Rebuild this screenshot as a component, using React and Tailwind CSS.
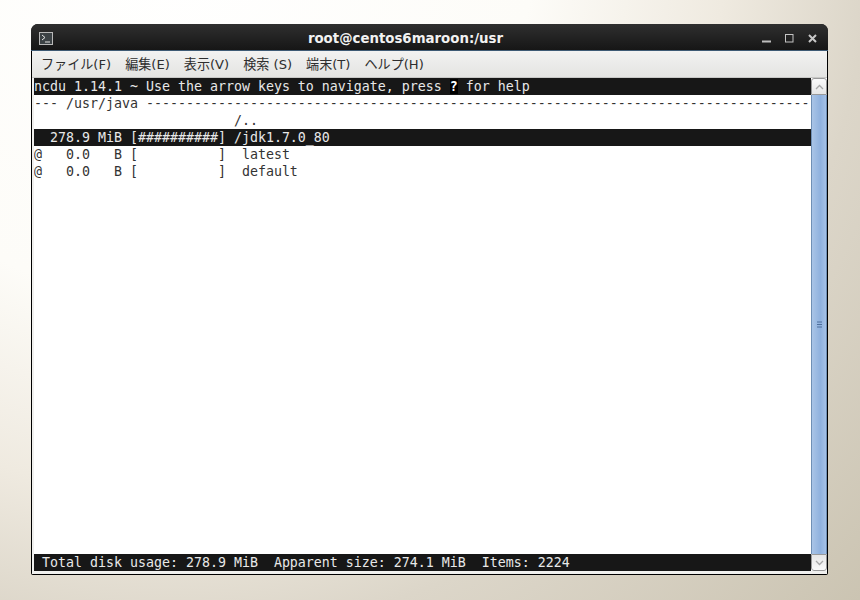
function Row({ dark, children }) {
  return (
    <div className={`h-[17px] leading-[17px] whitespace-pre overflow-hidden ${dark ? "bg-[#171717] text-[#e8e8e8]" : "text-[#333333]"}`}>
      {children}
    </div>
  );
}

const menus = ["ファイル(F)", "編集(E)", "表示(V)", "検索 (S)", "端末(T)", "ヘルプ(H)"];

export default function App() {
  return (
    <div className="h-[600px] w-[860px] overflow-hidden pl-[31px] pt-[24px] bg-[radial-gradient(circle_farthest-corner_at_20%_-10%,#ffffff_0%,#fdfcf8_38%,#efeae0_58%,#dcd6c9_73%,#cbc4b2_100%)]">
      <div className="w-[797px] h-[551px] flex flex-col rounded-t-[7px] rounded-b-[2px] bg-black overflow-hidden">
        {/* Title bar */}
        <div className="h-[27px] shrink-0 flex items-center pl-[8px] pt-[3px] bg-[linear-gradient(#2f2f2f,#161616)] border-b border-[#3e5a74]">
          <svg width="14" height="13" viewBox="0 0 14 13" className="shrink-0">
            <rect x="0.5" y="0.5" width="13" height="12" fill="#3c4245" stroke="#b9b9b9" />
            <path d="M3 3l3 2.5L3 8M6 10h5" fill="none" stroke="#e4e4e4" strokeWidth="1" />
          </svg>
          <div className="w-[705px] text-center text-[#f2f2f2] font-bold text-[13.33px] font-['DejaVu_Sans',sans-serif]">root@centos6maroon:/usr</div>
          <div className="flex items-center gap-[14px] pl-[4px]">
            <svg width="9" height="9" viewBox="0 0 9 9"><path d="M0 7.5h9" stroke="#bdbdbd" strokeWidth="2" /></svg>
            <svg width="9" height="9" viewBox="0 0 9 9"><rect x="0.5" y="0.5" width="7.5" height="7.5" fill="none" stroke="#c4c4c4" /></svg>
            <svg width="9" height="9" viewBox="0 0 9 9"><path d="M1 1l7 7M8 1l-7 7" stroke="#c8c8c8" strokeWidth="2" /></svg>
          </div>
        </div>
        {/* Body */}
        <div className="flex-1 flex flex-col mx-[1px] mb-[1px] bg-[#f0f0ee] min-h-0">
          {/* Menu */}
          <div className="h-[27px] shrink-0 flex items-center gap-[14px] pl-[9px] pt-[1px] text-[13.1px] text-[#2e2e2e] bg-[linear-gradient(#f2f2f1,#e4e4e2)] border-b border-[#c8c8c6] font-['DejaVu_Sans','Noto_Sans_CJK_JP',sans-serif]">
            {menus.map((m) => (
              <span key={m}>{m}</span>
            ))}
          </div>
          {/* Terminal + scrollbar */}
          <div className="flex-1 flex min-h-0 pl-[2px] pb-[3px]">
            <div className="w-[777px] flex flex-col bg-white text-[13.29px] font-['DejaVu_Sans_Mono',monospace] min-h-0">
              <Row dark>
                {"ncdu 1.14.1 ~ Use the arrow keys to navigate, press "}
                <span className="font-bold text-white bg-black">?</span>
                {" for help"}
              </Row>
              <Row>{"--- /usr/java " + "-".repeat(83)}</Row>
              <Row>{"                         /.."}</Row>
              <Row dark>{"  278.9 MiB [##########] /jdk1.7.0_80"}</Row>
              <Row>{"@   0.0   B [          ]  latest"}</Row>
              <Row>{"@   0.0   B [          ]  default"}</Row>
              <div className="flex-1" />
              <Row dark>{" Total disk usage: 278.9 MiB  Apparent size: 274.1 MiB  Items: 2224"}</Row>
            </div>
            {/* Scrollbar */}
            <div className="w-[16px] flex flex-col bg-white">
              <div className="h-[17px] shrink-0 flex items-center justify-center rounded-t-[3px] border border-[#9a9a9a] bg-[linear-gradient(#fafafa,#e6e6e6)]">
                <svg width="9" height="6" viewBox="0 0 9 6"><path d="M1 5l3.5-3.5L8 5" fill="none" stroke="#a8a8a8" strokeWidth="1.3" /></svg>
              </div>
              <div className="flex-1 flex items-center justify-center border-x border-[#6f8fb5] bg-[linear-gradient(90deg,#a9c4e6,#8fb1de_60%,#a5c1e6)]">
                <svg width="7" height="7" viewBox="0 0 7 7"><path d="M1 1h5M1 3.5h5M1 6h5" stroke="#4f6f9c" strokeWidth="1" /></svg>
              </div>
              <div className="h-[17px] shrink-0 flex items-center justify-center rounded-b-[3px] border border-[#9a9a9a] bg-[linear-gradient(#e6e6e6,#fafafa)]">
                <svg width="9" height="6" viewBox="0 0 9 6"><path d="M1 1l3.5 3.5L8 1" fill="none" stroke="#a8a8a8" strokeWidth="1.3" /></svg>
              </div>
            </div>
          </div>
        </div>
      </div>
    </div>
  );
}
